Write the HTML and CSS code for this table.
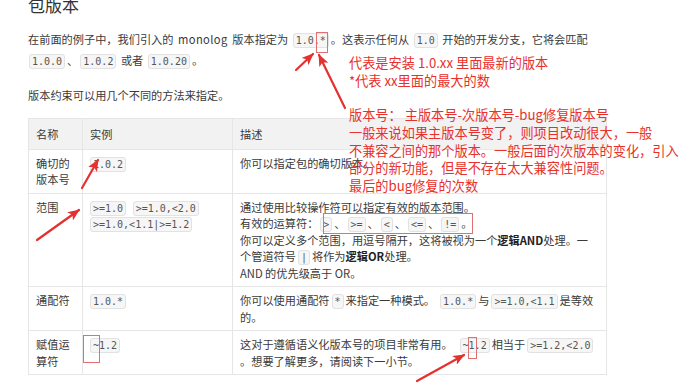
FILE: index.html
```html
<!DOCTYPE html>
<html lang="zh">
<head>
<meta charset="utf-8">
<link rel="stylesheet" href="styles.css">
</head>
<body>
<div class="page">
  <div class="content">
    <h2 class="title">包版本</h2>
    <p class="para">在前面的例子中，我们引入的 <span class="latin">monolog</span> 版本指定为 <code>1.0.*</code>。这表示任何从 <code>1.0</code> 开始的开发分支，它将会匹配 <code class="first">1.0.0</code>、<code>1.0.2</code> 或者 <code>1.0.20</code>。</p>
    <p class="para">版本约束可以用几个不同的方法来指定。</p>
    <table class="vtable">
      <colgroup><col class="c1"><col class="c2"><col class="c3"></colgroup>
      <thead>
        <tr><th>名称</th><th>实例</th><th>描述</th></tr>
      </thead>
      <tbody>
        <tr>
          <td>确切的版本号</td>
          <td><code>1.0.2</code></td>
          <td>你可以指定包的确切版本。</td>
        </tr>
        <tr>
          <td>范围</td>
          <td><code>&gt;=1.0</code> <code>&gt;=1.0,&lt;2.0</code><br><code>&gt;=1.0,&lt;1.1|&gt;=1.2</code></td>
          <td>通过使用比较操作符可以指定有效的版本范围。<br>有效的运算符：<code>&gt;</code>、<code>&gt;=</code>、<code>&lt;</code>、<code>&lt;=</code>、<code>!=</code>。<br>你可以定义多个范围，用逗号隔开，这将被视为一个<b>逻辑AND</b>处理。一个管道符号<code>|</code>将作为<b>逻辑OR</b>处理。<br>AND 的优先级高于 OR。</td>
        </tr>
        <tr>
          <td>通配符</td>
          <td><code>1.0.*</code></td>
          <td>你可以使用通配符<code>*</code>来指定一种模式。<code class="gap">1.0.*</code>与<code>&gt;=1.0,&lt;1.1</code>是等效的。</td>
        </tr>
        <tr>
          <td>赋值运算符</td>
          <td><code>~1.2</code></td>
          <td>这对于遵循语义化版本号的项目非常有用。<code class="gap-wide">~1.2</code>相当于<code>&gt;=1.2,&lt;2.0</code><br>。想要了解更多，请阅读下一小节。</td>
        </tr>
      </tbody>
    </table>
  </div>

  <div class="note note-a">代表是安装 1.0.xx 里面最新的版本<br>*代表 xx里面的最大的数</div>
  <div class="note note-b">版本号： 主版本号-次版本号-bug修复版本号<br>一般来说如果主版本号变了，则项目改动很大，一般<br>不兼容之间的那个版本。一般后面的次版本的变化，引入<br>部分的新功能，但是不存在太大兼容性问题。<br>最后的bug修复的次数</div>

  <svg class="marks" width="692" height="388" viewBox="0 0 692 388">
    <defs>
      <marker id="ah" markerWidth="12" markerHeight="10" refX="11" refY="5" orient="auto" markerUnits="userSpaceOnUse">
        <path d="M0,0 L12,5 L0,10 L3,5 Z" fill="#e53030"/>
      </marker>
    </defs>
    <g stroke="#e53030" stroke-width="2.2" fill="none" stroke-linecap="round">
      <line x1="296" y1="70" x2="313" y2="54" marker-end="url(#ah)"/>
      <line x1="345" y1="108" x2="319" y2="55" marker-end="url(#ah)"/>
      <line x1="82" y1="188" x2="98" y2="160" marker-end="url(#ah)"/>
      <line x1="37" y1="240" x2="79" y2="210" marker-end="url(#ah)"/>
      <line x1="417" y1="381" x2="464" y2="355" marker-end="url(#ah)"/>
    </g>
    <g stroke="#e07070" stroke-width="1" fill="none">
      <rect x="316.5" y="32.5" width="11" height="20"/>
      <rect x="323.5" y="213.5" width="149" height="20"/>
      <rect x="83.5" y="335.5" width="16" height="27"/>
      <rect x="468.5" y="337.5" width="8" height="21"/>
    </g>
  </svg>
</div>
</body>
</html>
```
FILE: styles.css
```css
html, body {
  margin: 0;
  padding: 0;
  background: #fff;
}
.page {
  position: relative;
  width: 692px;
  height: 388px;
  overflow: hidden;
  font-family: "Noto Sans CJK SC", "Noto Sans", sans-serif;
  color: #3a3a3a;
  font-size: 11.2px;
}
.content {
  width: 578px;
  padding-left: 28px;
}
.title {
  margin: -5px 0 0 0;
  font-size: 17px;
  line-height: 20px;
  font-weight: normal;
  color: #333;
}
.para {
  margin: 14px 0 0 0;
  line-height: 21px;
}
.para + .para {
  margin-top: 14px;
}
.latin {
  letter-spacing: 0.4px;
  padding: 0 2px;
}
code {
  font-family: "DejaVu Sans Mono", monospace;
  font-size: 10px;
  line-height: 1;
  color: #555;
  background: #f6f6f6;
  border: 1px solid #e2e2e2;
  border-radius: 3px;
  padding: 1px 2px;
  margin: 0 2px;
}
code.first {
  margin-left: 1px;
}
code.gap {
  margin-left: 5px;
}
code.gap-wide {
  margin-left: 7px;
}
.vtable {
  margin-top: 12px;
  width: 578px;
  table-layout: fixed;
  border-collapse: collapse;
  line-height: 16.5px;
}
.c1 { width: 54px; }
.c2 { width: 150px; }
.c3 { width: 374px; }
.vtable th, .vtable td {
  box-sizing: border-box;
  border: 1px solid #e6e6e6;
  text-align: left;
  vertical-align: top;
  padding: 5px 7px 5px 7px;
}
.vtable th {
  background: #f2f2f2;
  font-weight: normal;
  padding: 7px 7px 6px 7px;
}
.vtable td:nth-child(2) {
  padding-left: 5px;
}
.vtable b {
  font-weight: bold;
  color: #222;
}
.note {
  position: absolute;
  left: 349px;
  color: #e8302c;
  font-size: 13.2px;
  line-height: 17.8px;
  white-space: nowrap;
}
.note-a { top: 54px; }
.note-b { top: 106px; }
.marks {
  position: absolute;
  left: 0;
  top: 0;
}
```
